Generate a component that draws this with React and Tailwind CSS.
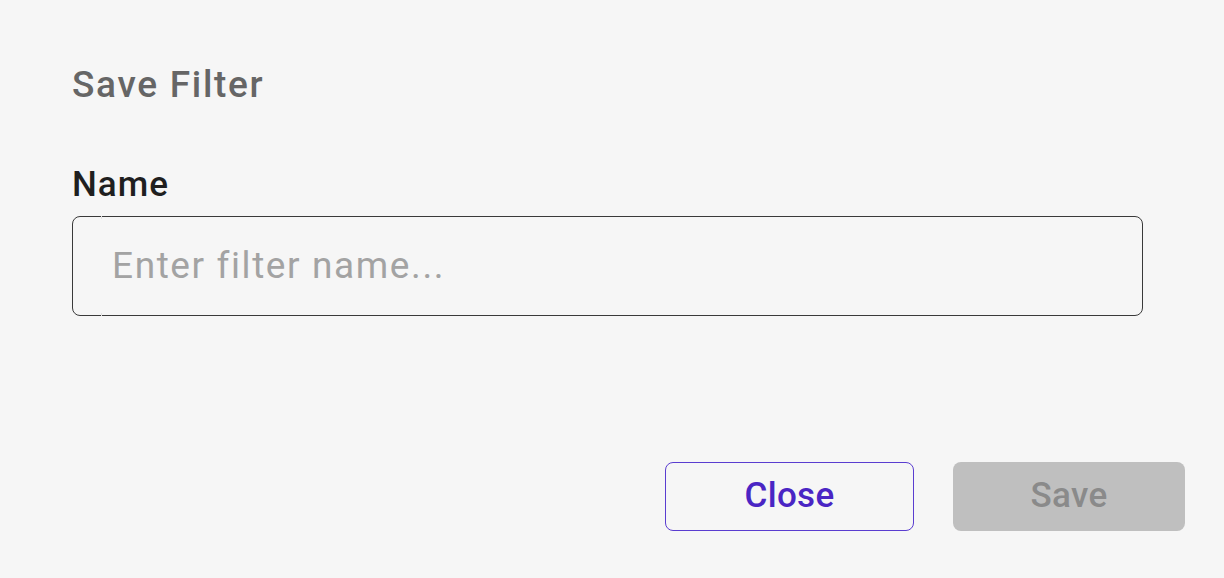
import React from 'react';

const App = () => {
  return (
    <div
      className="w-[1224px] h-[578px] bg-[#f6f6f6] flex flex-col px-[72px] pt-[63px]"
      style={{ fontFamily: 'Roboto, "Liberation Sans", sans-serif' }}
    >
      {/* Title */}
      <h2 className="text-[37px] leading-[44px] font-medium tracking-[1.7px] text-[#666666]">Save Filter</h2>

      {/* Name field */}
      <label className="mt-[58px] text-[35px] leading-[40px] font-medium tracking-[1px] text-[#1f1f1f]">
        Name
      </label>
      <div className="relative mt-[11px] w-[1071px] h-[100px] rounded-[8px] border border-[#3a3a3a] flex items-center pl-[39px]">
        <span className="absolute left-[28px] top-[-1px] w-[1px] h-[3px] bg-[#e2e2e2]"></span>
        <span className="absolute left-[28px] bottom-[-1px] w-[1px] h-[3px] bg-[#e2e2e2]"></span>
        <input
          className="w-full bg-transparent outline-none text-[37px] tracking-[1.6px] text-[#1f1f1f] placeholder:text-[#a3a3a3]"
          placeholder="Enter filter name..."
        />
      </div>

      {/* Actions */}
      <div className="mt-auto mb-[47px] flex justify-end gap-[39px] mr-[-33px]">
        <button className="w-[249px] h-[69px] rounded-[8px] border border-[#5a3dd0] text-[35px] font-medium tracking-[0.3px] text-[#4a25c4]">
          Close
        </button>
        <button className="w-[232px] h-[69px] rounded-[8px] bg-[#bfbfbf] text-[35px] font-medium tracking-[0.3px] text-[#8a8a8a]">
          Save
        </button>
      </div>
    </div>
  );
};

export default App;
